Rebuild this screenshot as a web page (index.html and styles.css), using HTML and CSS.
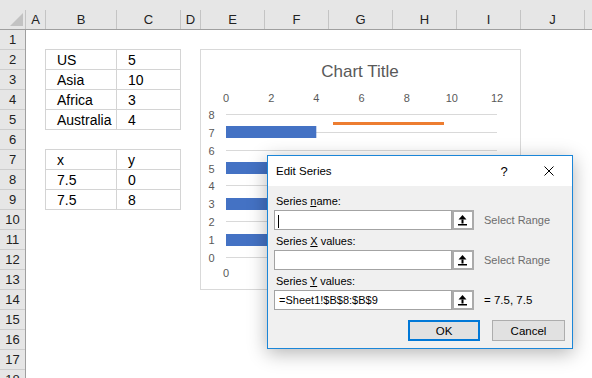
FILE: index.html
```html
<!DOCTYPE html>
<html lang="en">
  <head>
    <meta charset="UTF-8" />
    <title>Edit Series</title>
    <link rel="stylesheet" href="styles.css">
  </head>
  <body>
    <div class="sheet">
      <div class="colhead">
        <div class="corner"><span class="tri"></span></div>
        <div class="w20">A</div>
        <div class="w71">B</div>
        <div class="w64">C</div>
        <div class="w20">D</div>
        <div class="w64">E</div>
        <div class="w64">F</div>
        <div class="w64">G</div>
        <div class="w64">H</div>
        <div class="w64">I</div>
        <div class="w64">J</div>
        <div class="rest"></div>
      </div>

      <div class="grid">
        <div class="rowhead">
          <div>1</div><div>2</div><div>3</div><div>4</div><div>5</div><div>6</div>
          <div>7</div><div>8</div><div>9</div><div>10</div><div>11</div><div>12</div>
          <div>13</div><div>14</div><div>15</div><div>16</div><div>17</div><div>18</div>
        </div>
        <div class="cells">
          <table class="data">
            <tr><td class="k">US</td><td class="v">5</td></tr>
            <tr><td class="k">Asia</td><td class="v">10</td></tr>
            <tr><td class="k">Africa</td><td class="v">3</td></tr>
            <tr><td class="k">Australia</td><td class="v">4</td></tr>
          </table>
          <table class="data">
            <tr><td class="k">x</td><td class="v">y</td></tr>
            <tr><td class="k">7.5</td><td class="v">0</td></tr>
            <tr><td class="k">7.5</td><td class="v">8</td></tr>
          </table>
        </div>
      </div>

      <div class="chart">
        <svg class="plot" width="319" height="239" viewBox="0 0 319 239">
          <text class="ttl" x="159" y="27">Chart Title</text>
          <g class="lab">
            <text x="25" y="52">0</text>
            <text x="70.2" y="52">2</text>
            <text x="115.3" y="52">4</text>
            <text x="160.5" y="52">6</text>
            <text x="205.7" y="52">8</text>
            <text x="250.8" y="52">10</text>
            <text x="296" y="52">12</text>
          </g>
          <g class="gl">
            <line x1="25" x2="296" y1="64.5" y2="64.5" />
            <line x1="25" x2="296" y1="82.5" y2="82.5" />
            <line x1="25" x2="296" y1="100.5" y2="100.5" />
            <line x1="25" x2="296" y1="118.5" y2="118.5" />
            <line x1="25" x2="296" y1="135.5" y2="135.5" />
            <line x1="25" x2="296" y1="153.5" y2="153.5" />
            <line x1="25" x2="296" y1="171.5" y2="171.5" />
            <line x1="25" x2="296" y1="189.5" y2="189.5" />
            <line x1="25" x2="296" y1="207.5" y2="207.5" />
          </g>
          <g class="lab">
            <text x="10.5" y="68.5">8</text>
            <text x="10.5" y="86.5">7</text>
            <text x="10.5" y="104.5">6</text>
            <text x="10.5" y="122.5">5</text>
            <text x="10.5" y="139.5">4</text>
            <text x="10.5" y="157.5">3</text>
            <text x="10.5" y="175.5">2</text>
            <text x="10.5" y="193.5">1</text>
            <text x="10.5" y="211.5">0</text>
            <text x="25" y="226.5">0</text>
          </g>
          <g class="bars">
            <rect x="25" y="184" width="112.9" height="12" />
            <rect x="25" y="148" width="225.8" height="12" />
            <rect x="25" y="112" width="67.7" height="12" />
            <rect x="25" y="76" width="90.3" height="12" />
          </g>
          <line class="series2" x1="132" x2="243" y1="73.5" y2="73.5" />
        </svg>
      </div>

      <div class="dialog">
        <div class="titlebar">
          <span class="dtitle">Edit Series</span>
          <span class="help">?</span>
          <span class="close">
            <svg width="10" height="10" viewBox="0 0 10 10">
              <path d="M0.5 0.5 L9.5 9.5 M9.5 0.5 L0.5 9.5" stroke="#000" stroke-width="1" />
            </svg>
          </span>
        </div>
        <div class="dbody">
          <div class="lbl first">Series <u>n</u>ame:</div>
          <div class="field">
            <div class="input"><span class="caret"></span></div>
            <div class="pick">
              <svg width="9" height="11" viewBox="0 0 9 11">
                <polygon points="4.5,0 8.5,4.5 0.5,4.5" />
                <rect x="3.5" y="4.5" width="2" height="4" />
                <rect x="0" y="9" width="9" height="1.5" />
              </svg>
            </div>
            <div class="note">Select Range</div>
          </div>

          <div class="lbl">Series <u>X</u> values:</div>
          <div class="field">
            <div class="input"></div>
            <div class="pick">
              <svg width="9" height="11" viewBox="0 0 9 11">
                <polygon points="4.5,0 8.5,4.5 0.5,4.5" />
                <rect x="3.5" y="4.5" width="2" height="4" />
                <rect x="0" y="9" width="9" height="1.5" />
              </svg>
            </div>
            <div class="note">Select Range</div>
          </div>

          <div class="lbl">Series <u>Y</u> values:</div>
          <div class="field">
            <div class="input">=Sheet1!$B$8:$B$9</div>
            <div class="pick">
              <svg width="9" height="11" viewBox="0 0 9 11">
                <polygon points="4.5,0 8.5,4.5 0.5,4.5" />
                <rect x="3.5" y="4.5" width="2" height="4" />
                <rect x="0" y="9" width="9" height="1.5" />
              </svg>
            </div>
            <div class="note result">= 7.5, 7.5</div>
          </div>

          <div class="buttons">
            <div class="btn ok">OK</div>
            <div class="btn cancel">Cancel</div>
          </div>
        </div>
      </div>
    </div>
  </body>
</html>
```

FILE: styles.css
```css
body {
  margin: 0;
  font-family: "Liberation Sans", Arial, sans-serif;
  background: #fff;
  overflow: hidden;
}
.sheet {
  position: relative;
  width: 592px;
  height: 378px;
  overflow: hidden;
}

/* column letters */
.colhead {
  display: flex;
  height: 30px;
  box-sizing: border-box;
  background: #e6e6e6;
  border-bottom: 1px solid #9f9f9f;
}
.colhead > div {
  box-sizing: border-box;
  flex-shrink: 0;
  margin-top: 10px;
  height: 19px;
  border-right: 1px solid #c4c4c4;
  text-align: center;
  font-size: 13px;
  line-height: 19px;
  color: #222;
}
.colhead .corner {
  width: 26px;
}
.tri {
  display: block;
  width: 13px;
  height: 13px;
  margin: 3px 0 0 10px;
  background: #c2c2c2;
  clip-path: polygon(100% 0, 100% 100%, 0 100%);
}
.w20 {
  width: 20px;
}
.w71 {
  width: 71px;
}
.w64 {
  width: 64px;
}
.colhead .rest {
  flex: 1;
  border-right: none;
}

/* rows */
.grid {
  display: flex;
}
.rowhead {
  width: 26px;
  flex-shrink: 0;
  box-sizing: border-box;
  background: #e6e6e6;
  border-right: 1px solid #9f9f9f;
}
.rowhead div {
  height: 20px;
  box-sizing: border-box;
  border-bottom: 1px solid #cdcdcd;
  text-align: center;
  font-size: 13px;
  line-height: 19px;
  color: #222;
}
.cells {
  padding-left: 19px;
}
.data {
  border-spacing: 0;
  margin-top: 19px;
  border-top: 1px solid #d4d4d4;
  border-left: 1px solid #d4d4d4;
  font-size: 14px;
  color: #000;
}
.data td {
  box-sizing: border-box;
  height: 20px;
  padding: 0 0 0 11px;
  border-right: 1px solid #d4d4d4;
  border-bottom: 1px solid #d4d4d4;
  vertical-align: middle;
}
.data td.k {
  width: 71px;
}
.data td.v {
  width: 64px;
}

/* chart floats over the sheet */
.chart {
  position: absolute;
  left: 200px;
  top: 49px;
  width: 321px;
  height: 241px;
  box-sizing: border-box;
  border: 1px solid #d9d9d9;
  background: #fff;
}
.plot {
  display: block;
  font-family: "Liberation Sans", Arial, sans-serif;
}
.ttl {
  font-size: 17px;
  fill: #595959;
  text-anchor: middle;
}
.lab text {
  font-size: 11px;
  fill: #595959;
  text-anchor: middle;
}
.gl line {
  stroke: #d9d9d9;
  stroke-width: 1;
}
.bars rect {
  fill: #4472c4;
}
.series2 {
  stroke: #ed7d31;
  stroke-width: 3;
}

/* dialog window */
.dialog {
  position: absolute;
  left: 267px;
  top: 155px;
  width: 306px;
  height: 194px;
  box-sizing: border-box;
  border: 1px solid #1b86d8;
  background: #f0f0f0;
  box-shadow: 0 4px 18px rgba(0, 0, 0, 0.3);
  font-size: 11px;
  color: #000;
}
.titlebar {
  display: flex;
  align-items: center;
  height: 30px;
  background: #fff;
  padding-left: 8px;
}
.dtitle {
  flex: 1;
  font-size: 11.5px;
}
.help {
  width: 44px;
  text-align: center;
  font-size: 13px;
}
.close {
  width: 46px;
  display: flex;
  justify-content: center;
}
.close svg {
  display: block;
}
.dbody {
  padding: 0 7px 0 6px;
}
.lbl {
  margin: 3px 0 1px 2px;
  line-height: 16px;
}
.lbl.first {
  margin-top: 7px;
}
.field {
  display: flex;
  align-items: center;
}
.input {
  width: 178px;
  height: 20px;
  box-sizing: border-box;
  border: 1px solid #a3a3a3;
  background: #fff;
  padding-left: 4px;
  line-height: 18px;
  white-space: nowrap;
}
.caret {
  display: inline-block;
  width: 1px;
  height: 13px;
  margin-left: -1px;
  background: #000;
  vertical-align: middle;
}
.pick {
  width: 22px;
  height: 20px;
  box-sizing: border-box;
  border: 2px solid #ababab;
  background: #fff;
  display: flex;
  justify-content: center;
  align-items: center;
  padding-right: 2px;
}
.pick svg {
  display: block;
  fill: #000;
}
.note {
  margin-left: 10px;
  color: #6d6d6d;
  font-size: 11px;
}
.note.result {
  color: #000;
  font-size: 11.5px;
}
.buttons {
  display: flex;
  justify-content: flex-end;
  gap: 12px;
  margin-top: 10px;
}
.btn {
  height: 21px;
  box-sizing: border-box;
  background: #e1e1e1;
  border: 1px solid #adadad;
  display: flex;
  justify-content: center;
  align-items: center;
  font-size: 11.5px;
}
.btn.ok {
  width: 72px;
  border: 2px solid #0078d7;
}
.btn.cancel {
  width: 73px;
}
```
